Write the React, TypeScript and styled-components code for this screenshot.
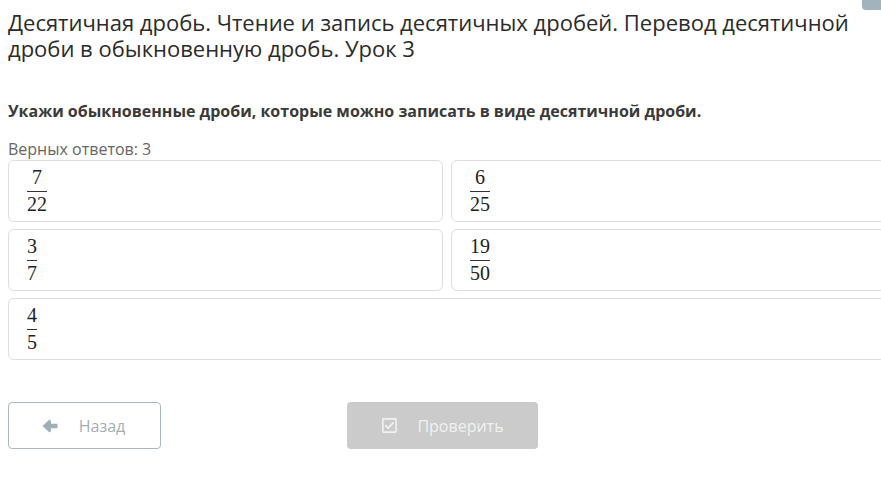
import React from 'react';
import styled, {createGlobalStyle} from 'styled-components';
import {FaRegCheckSquare} from 'react-icons/fa';

const GlobalStyle = createGlobalStyle`
  body {
    margin: 0;
    background: #fff;
    overflow: hidden;
    font-family: "Open Sans", "Noto Sans", sans-serif;
    color: #333;
  }
`;

const Page = styled.div`
  position: relative;
  width: 878px;
  padding: 0 8px;
`;

const CornerTab = styled.div`
  position: absolute;
  top: 0;
  left: 862px;
  width: 26px;
  height: 10px;
  border-radius: 0 0 4px 4px;
  background: #a3b3bd;
`;

const Title = styled.h1`
  margin: 0;
  padding-top: 9px;
  font-size: 22px;
  line-height: 26px;
  font-weight: 400;
  color: #2b2b2b;
`;

const Question = styled.p`
  margin: 39px 0 0;
  font-size: 16px;
  line-height: 22px;
  font-weight: 700;
  color: #3a3a3a;
`;

const Hint = styled.p`
  margin: 16px 0 0;
  font-size: 16px;
  line-height: 22px;
  color: #666;
`;

const Options = styled.div`
  display: grid;
  grid-template-columns: 435px 435px;
  gap: 7px 8px;
`;

const Option = styled.div<{$wide?: boolean}>`
  grid-column: ${p => (p.$wide ? '1 / span 2' : 'auto')};
  height: 62px;
  box-sizing: border-box;
  border: 1px solid #dedede;
  border-radius: 6px;
  padding-left: 18px;
  display: flex;
  align-items: center;
`;

const Frac = styled.span`
  display: inline-flex;
  flex-direction: column;
  align-items: center;
  font-family: "Liberation Serif", "DejaVu Serif", serif;
  font-size: 20px;
  line-height: 19px;
  color: #222;
`;

const Bar = styled.span`
  align-self: stretch;
  height: 1px;
  background: #333;
  margin: 4px 0 3px;
`;

const Buttons = styled.div`
  margin-top: 42px;
  display: flex;
  gap: 186px;
`;

const BackButton = styled.button`
  width: 153px;
  height: 47px;
  border: 1px solid #aab8be;
  border-radius: 4px;
  background: #fff;
  color: #a3b0b5;
  font-family: "Open Sans", sans-serif;
  font-size: 16px;
  display: flex;
  align-items: center;
  justify-content: center;
  gap: 21px;
  padding-right: 8px;
`;

const CheckButton = styled.button`
  width: 191px;
  height: 47px;
  border: none;
  border-radius: 4px;
  background: #cbcbcb;
  color: #f1f1f1;
  font-family: "Open Sans", sans-serif;
  font-size: 16px;
  display: flex;
  align-items: center;
  justify-content: center;
  gap: 19px;
  padding-right: 6px;
`;

const ArrowIcon = () => (
    <svg width="16" height="14" viewBox="0 0 16 14" fill="#9fb0b6">
        <path d="M0.5 7 L7.5 0.5 L9 2 L9 4.8 L15.5 4.8 L15.5 9.2 L9 9.2 L9 12 L7.5 13.5 Z"/>
    </svg>
);

const fractions: {num: string; den: string; wide?: boolean}[] = [
    {num: '7', den: '22'},
    {num: '6', den: '25'},
    {num: '3', den: '7'},
    {num: '19', den: '50'},
    {num: '4', den: '5', wide: true},
];

const App = () => {
    return (
        <Page>
            <GlobalStyle/>
            <CornerTab/>
            <Title>
                Десятичная дробь. Чтение и запись десятичных дробей. Перевод десятичной
                дроби в обыкновенную дробь. Урок 3
            </Title>
            <Question>Укажи обыкновенные дроби, которые можно записать в виде десятичной дроби.</Question>
            <Hint>Верных ответов: 3</Hint>
            <Options>
                {fractions.map(f => (
                    <Option key={f.num + f.den} $wide={f.wide}>
                        <Frac>
                            <span>{f.num}</span>
                            <Bar/>
                            <span>{f.den}</span>
                        </Frac>
                    </Option>
                ))}
            </Options>
            <Buttons>
                <BackButton>
                    <ArrowIcon/>
                    Назад
                </BackButton>
                <CheckButton>
                    <FaRegCheckSquare size={17}/>
                    Проверить
                </CheckButton>
            </Buttons>
        </Page>
    );
};

export default App;
